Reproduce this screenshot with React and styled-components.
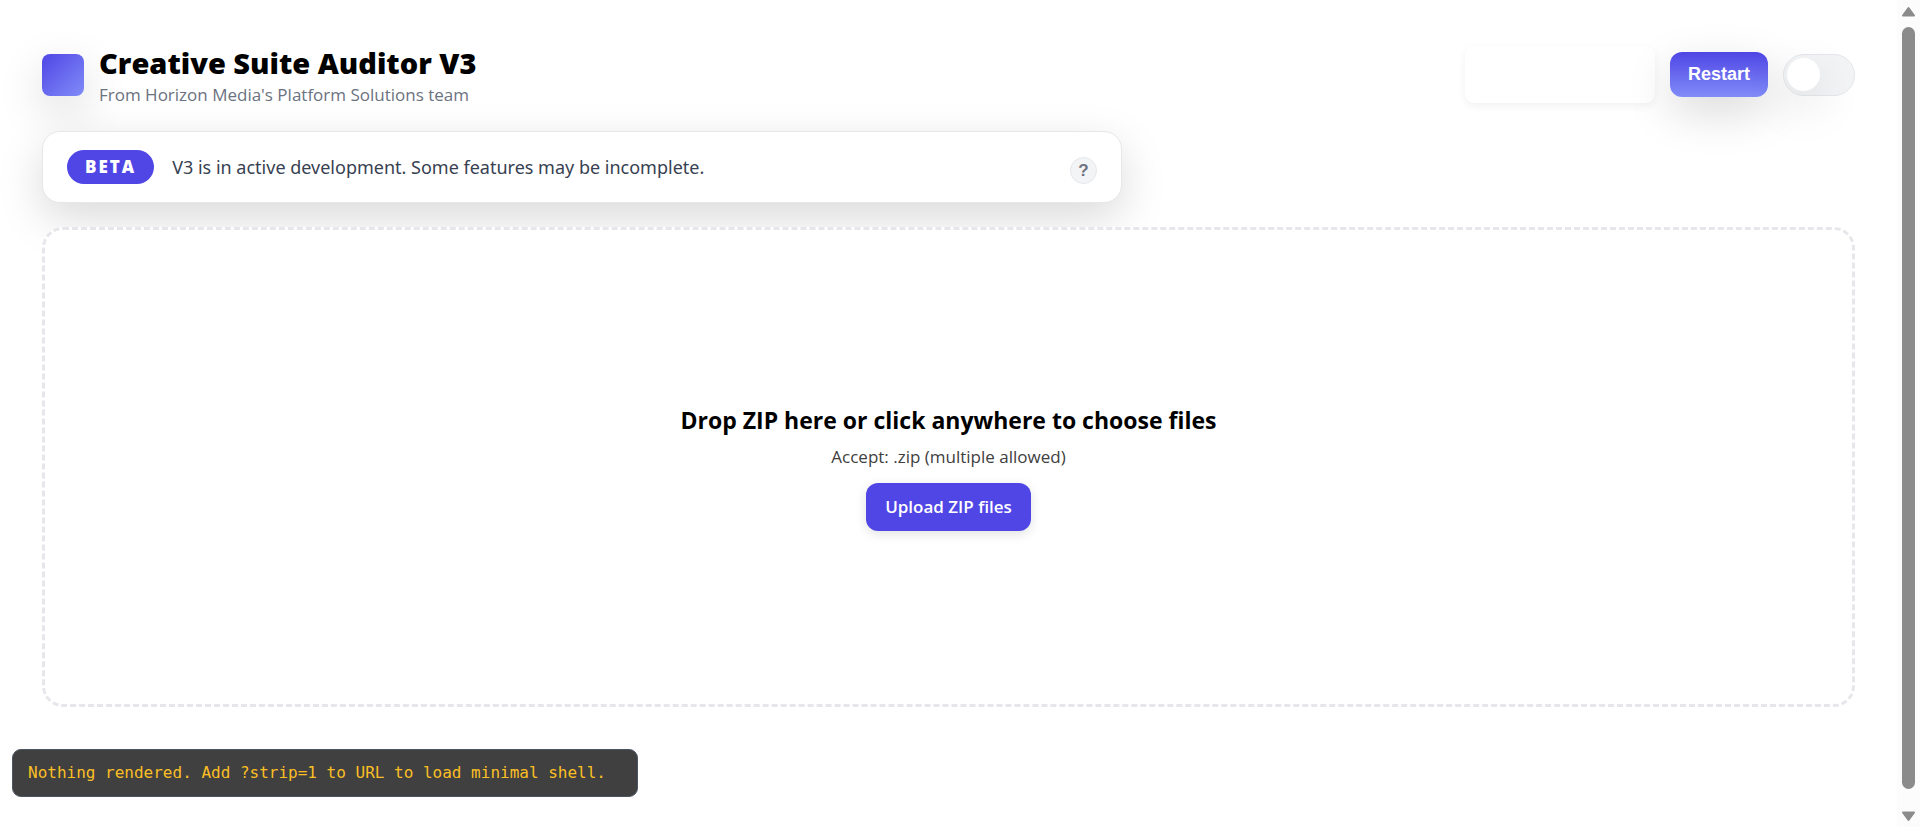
import React from "react";
import styled, { createGlobalStyle } from "styled-components";

const indigo = "#4f46e5";
const softShadow = "0 15px 45px rgba(0, 0, 0, 0.15)";

const GlobalStyle = createGlobalStyle`
  *, *::before, *::after { box-sizing: border-box; }
  body {
    margin: 0;
    background: #fff;
    color: #000;
    font-family: "Open Sans", "Noto Sans", sans-serif;
  }
  h1, h2, p { margin: 0; }
`;

const Shell = styled.div`
  display: grid;
  grid-template-columns: minmax(0, 1fr) 23px;
  min-height: 100vh;
`;

const Page = styled.main`
  display: flex;
  flex-direction: column;
  padding: 42px 42px 0;
`;

const Header = styled.header`
  display: flex;
  align-items: center;
  justify-content: space-between;
`;

const Brand = styled.div`
  display: flex;
  align-items: center;
  gap: 15px;
`;

const Logo = styled.span`
  width: 42px;
  height: 42px;
  border-radius: 8px;
  background: linear-gradient(135deg, ${indigo}, #818cf8);
  box-shadow: ${softShadow};
`;

const Title = styled.h1`
  font-size: 29px;
  font-weight: 800;
  line-height: 41px;
`;

const Tagline = styled.p`
  color: #6b7280;
  font-size: 17px;
  line-height: 24px;
`;

const Actions = styled.div`
  display: flex;
  align-items: center;
  gap: 15px;
`;

const StatusCard = styled.div`
  width: 190px;
  height: 57px;
  border-radius: 9px;
  background: #fff;
  box-shadow: 0 3px 9px rgba(0, 0, 0, 0.06);
`;

const RestartButton = styled.button`
  height: 45px;
  padding: 0 18px;
  border: 0;
  border-radius: 12px;
  background: linear-gradient(180deg, ${indigo}, #818cf8);
  box-shadow: ${softShadow};
  color: #fff;
  font: 700 18px/21px "Liberation Sans", sans-serif;
`;

const Toggle = styled.input`
  appearance: none;
  display: flex;
  align-items: center;
  width: 72px;
  height: 42px;
  margin: 0;
  padding: 0 3px;
  border: 1px solid #e5e7eb;
  border-radius: 21px;
  background: #f3f4f6;

  &::before {
    content: "";
    width: 33px;
    height: 33px;
    border-radius: 50%;
    background: #fff;
    box-shadow: ${softShadow};
  }
`;

const Banner = styled.section`
  display: flex;
  align-items: center;
  gap: 18px;
  width: 100%;
  max-width: 1080px;
  margin-top: 24px;
  padding: 18px 24px;
  border: 1px solid #e5e7eb;
  border-radius: 18px;
  background: #fff;
  box-shadow: ${softShadow};
`;

const Badge = styled.span`
  padding: 0 18px;
  border-radius: 17px;
  background: ${indigo};
  color: #fff;
  font-size: 17px;
  font-weight: 800;
  line-height: 34px;
  letter-spacing: 2px;
`;

const BannerText = styled.p`
  flex: 1;
  color: #374151;
  font-family: "Noto Sans", sans-serif;
  font-size: 18px;
  line-height: 27px;
`;

const HelpButton = styled.button`
  align-self: flex-end;
  width: 27px;
  height: 27px;
  padding: 0;
  border: 1px solid #e5e7eb;
  border-radius: 50%;
  background: #f3f4f6;
  color: #6b7280;
  font: 700 17px/25px "Liberation Sans", sans-serif;
`;

const DropZone = styled.section`
  display: flex;
  flex-direction: column;
  align-items: center;
  justify-content: center;
  min-height: 480px;
  margin-top: 24px;
  border: 3px dashed #e5e7eb;
  border-radius: 21px;
  background: #fff;
`;

const DropTitle = styled.h2`
  font-size: 23px;
  font-weight: 700;
  line-height: 33px;
`;

const DropHint = styled.p`
  margin-top: 8px;
  color: #404040;
  font-size: 17px;
  line-height: 24px;
`;

const UploadButton = styled.button`
  height: 48px;
  margin-top: 14px;
  padding: 0 19px;
  border: 0;
  border-radius: 12px;
  background: ${indigo};
  box-shadow: 0 3px 12px rgba(0, 0, 0, 0.12);
  color: #fff;
  font: 600 17px/24px "Open Sans", "Noto Sans", sans-serif;
`;

const Toast = styled.div`
  position: fixed;
  left: 12px;
  bottom: 30px;
  min-width: 626px;
  padding: 11px 15px;
  border: 1px solid #4b5563;
  border-radius: 9px;
  background: #404040;
  color: #fbbf24;
  font: 16px/24px "DejaVu Sans Mono", monospace;
`;

const Scrollbar = styled.div`
  position: sticky;
  top: 0;
  display: flex;
  flex-direction: column;
  align-items: center;
  gap: 10px;
  height: 100vh;
  padding: 6px 0 5px;
  background: #fcfcfc;
`;

const Thumb = styled.div`
  flex: 1;
  width: 13px;
  margin-bottom: 12px;
  border-radius: 7px;
  background: #8b8b8b;
`;

const Arrow = ({ d }) => (
  <svg width="15" height="11" viewBox="0 0 15 11" aria-hidden="true">
    <path d={d} fill="#8b8b8b" stroke="#8b8b8b" strokeWidth="2" strokeLinejoin="round" />
  </svg>
);

export default function App() {
  return (
    <>
      <GlobalStyle />
      <Shell>
        <Page>
          <Header>
            <Brand>
              <Logo />
              <div>
                <Title>Creative Suite Auditor V3</Title>
                <Tagline>From Horizon Media's Platform Solutions team</Tagline>
              </div>
            </Brand>
            <Actions>
              <StatusCard />
              <RestartButton type="button">Restart</RestartButton>
              <Toggle type="checkbox" role="switch" aria-label="Dark mode" />
            </Actions>
          </Header>
          <Banner>
            <Badge>BETA</Badge>
            <BannerText>V3 is in active development. Some features may be incomplete.</BannerText>
            <HelpButton type="button">?</HelpButton>
          </Banner>
          <DropZone>
            <DropTitle>Drop ZIP here or click anywhere to choose files</DropTitle>
            <DropHint>Accept: .zip (multiple allowed)</DropHint>
            <UploadButton type="button">Upload ZIP files</UploadButton>
          </DropZone>
        </Page>
        <Scrollbar>
          <Arrow d="M7.5 2 L13 9.5 H2 Z" />
          <Thumb />
          <Arrow d="M7.5 9 L13 1.5 H2 Z" />
        </Scrollbar>
      </Shell>
      <Toast role="status">Nothing rendered. Add ?strip=1 to URL to load minimal shell.</Toast>
    </>
  );
}
